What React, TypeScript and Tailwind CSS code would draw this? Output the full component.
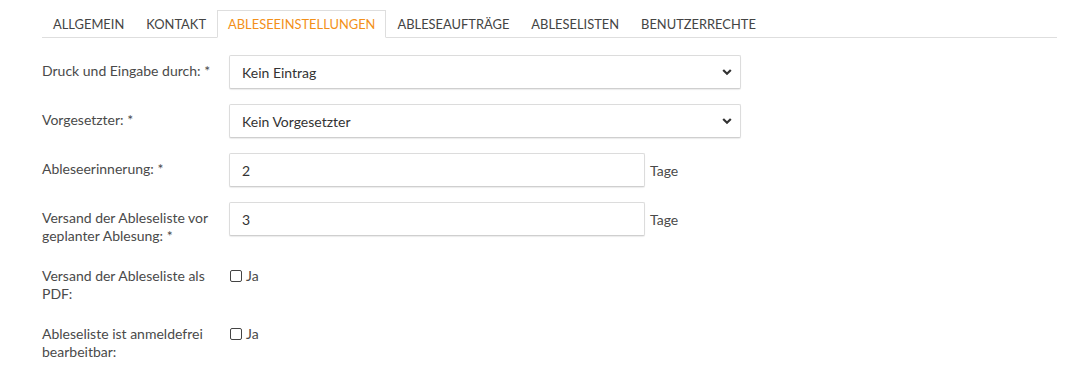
import { ReactNode } from "react";

const tabs = ["Allgemein", "Kontakt", "Ableseeinstellungen", "Ableseaufträge", "Ableselisten", "Benutzerrechte"];

function Chevron() {
  return (
    <svg className="pointer-events-none absolute right-[9px] top-1/2 -translate-y-1/2" width="10" height="7" viewBox="0 0 10 7">
      <path d="M1.2 1.5 L5 5.2 L8.8 1.5" fill="none" stroke="#333" strokeWidth="2.2" />
    </svg>
  );
}

function Row({ label, children }: { label: ReactNode; children: ReactNode }) {
  return (
    <div className="mb-[15px] flex">
      <div className="w-[187px] shrink-0 pr-3 pt-[7px] leading-[18px]">{label}</div>
      <div className="flex flex-1 items-start">{children}</div>
    </div>
  );
}

function Select({ value }: { value: string }) {
  return (
    <div className="relative w-[512px]">
      <select
        defaultValue={value}
        className="h-[34px] w-full appearance-none rounded-[2px] border border-[#dcdcdc] border-b-[#cfcfcf] bg-white px-3 text-[14px] text-[#333] shadow-[0_1px_1px_rgba(0,0,0,0.08)] outline-none"
      >
        <option>{value}</option>
      </select>
      <Chevron />
    </div>
  );
}

function TextInput({ value }: { value: string }) {
  return (
    <div className="flex items-center">
      <input
        defaultValue={value}
        className="h-[34px] w-[416px] rounded-[2px] border border-[#dcdcdc] border-b-[#cfcfcf] bg-white px-3 text-[14px] text-[#333] shadow-[0_1px_1px_rgba(0,0,0,0.08)] outline-none"
      />
      <span className="ml-[5px] text-[#4a4a4a]">Tage</span>
    </div>
  );
}

function Check() {
  return (
    <label className="flex items-center pt-[7px] leading-[18px]">
      <span className="ml-[1px] inline-block h-[12px] w-[12px] rounded-[2px] border border-[#444] bg-white" />
      <span className="ml-[4px] text-[#4a4a4a]">Ja</span>
    </label>
  );
}

export default function App() {
  return (
    <div className="min-h-[392px] bg-white pl-[42px] pr-[29px] pt-[10px] text-[14px] text-[#4a4a4a]" style={{ fontFamily: "Lato, 'Noto Sans', sans-serif" }}>
      {/* Tabs */}
      <div className="flex border-b border-[#dedede]">
        {tabs.map((t, i) => (
          <div
            key={t}
            className={
              i === 2
                ? "-mb-px h-[28px] border border-b-white border-[#dedede] bg-white px-[10px] pt-[4px] text-[12.9px] uppercase text-[#f39019]"
                : "h-[27px] border border-transparent px-[10px] pt-[4px] text-[12.9px] uppercase text-[#444]"
            }
          >
            {t}
          </div>
        ))}
      </div>

      {/* Form */}
      <div className="mt-[17px]">
        <Row label="Druck und Eingabe durch: *">
          <Select value="Kein Eintrag" />
        </Row>
        <Row label="Vorgesetzter: *">
          <Select value="Kein Vorgesetzter" />
        </Row>
        <Row label="Ableseerinnerung: *">
          <TextInput value="2" />
        </Row>
        <Row label={<>Versand der Ableseliste vor<br />geplanter Ablesung: *</>}>
          <TextInput value="3" />
        </Row>
        <Row label={<>Versand der Ableseliste als<br />PDF:</>}>
          <Check />
        </Row>
        <Row label={<>Ableseliste ist anmeldefrei<br />bearbeitbar:</>}>
          <Check />
        </Row>
      </div>
    </div>
  );
}
